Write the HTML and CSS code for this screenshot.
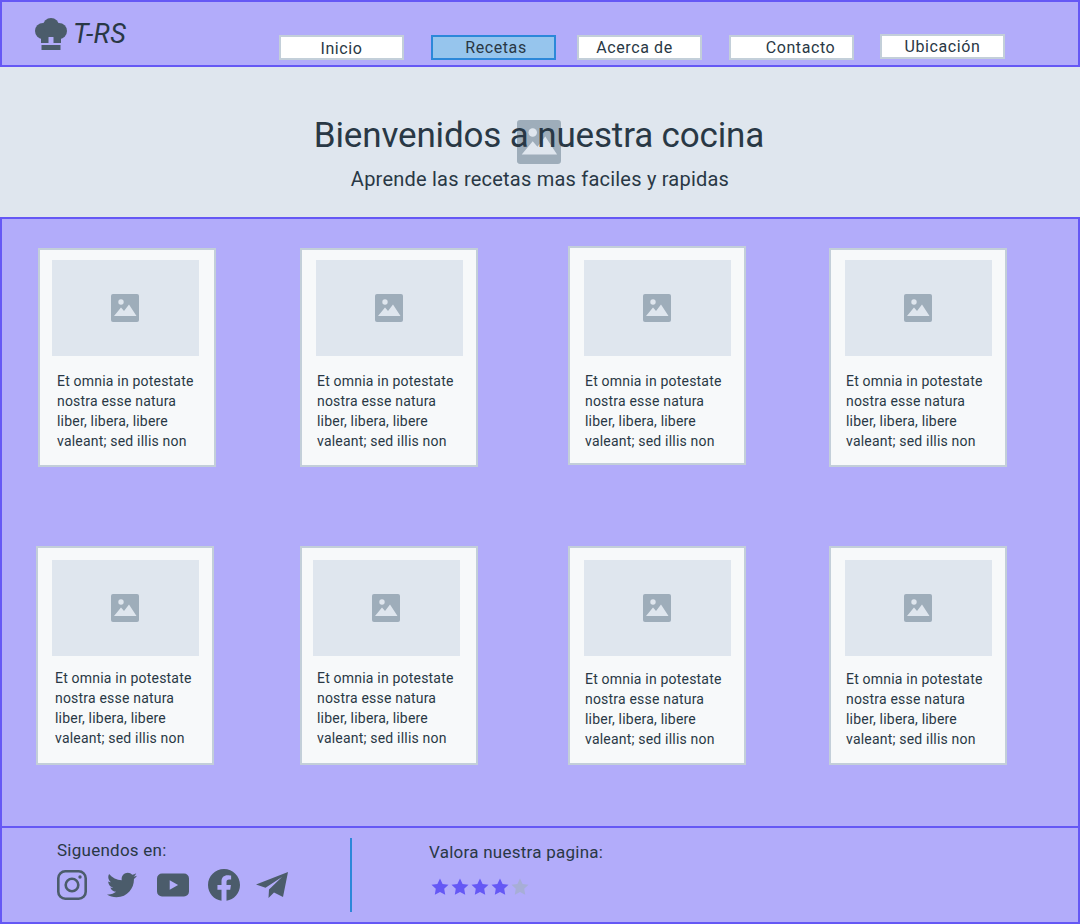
FILE: index.html
```html
<!doctype html>
<html lang="es">

<head>
  <title>T-RS</title>
  <meta charset="utf-8" />
  <link rel="stylesheet" href="styles.css">
</head>

<body>
  <svg class="defs" width="0" height="0">
    <symbol id="img" viewBox="0 0 28 28">
      <rect width="28" height="28" rx="2" fill="#9eadba" />
      <circle cx="10" cy="8" r="2.7" fill="#dfe6ee" />
      <path d="M3 22 L10 13.5 L13 17 L18 10.5 L25.5 22 Z" fill="#dfe6ee" />
    </symbol>
    <symbol id="star" viewBox="0 0 20 20">
      <path d="M10 1.5l2.6 5.4 5.9.8-4.3 4.1 1 5.9-5.200-2.800-5.200 2.800 1-5.900L1.500 7.700l5.900-.8z" />
    </symbol>
  </svg>

  <header class="topbar">
    <div class="logo">
      <svg class="logo-icon" viewBox="0 0 32 32">
        <circle cx="8" cy="13" r="8" />
        <circle cx="24" cy="13" r="8" />
        <circle cx="16" cy="8" r="8" />
        <path d="M6 14h20v11h-7.500v-6h-5v6H6z" />
        <rect x="6.500" y="27" width="19" height="5" />
      </svg>
      <span class="logo-text">T-RS</span>
    </div>
    <nav class="nav">
      <a class="nav-item nav-home">Inicio</a>
      <a class="nav-item nav-active">Recetas</a>
      <a class="nav-item nav-about">Acerca de</a>
      <a class="nav-item nav-contact">Contacto</a>
      <a class="nav-item nav-place">Ubicación</a>
    </nav>
  </header>

  <section class="hero">
    <svg class="hero-icon"><use href="#img" /></svg>
    <h1>Bienvenidos a nuestra cocina</h1>
    <p>Aprende las recetas mas faciles y rapidas</p>
  </section>

  <main class="recipes">
    <article class="card card-first">
      <div class="media media-14"><svg><use href="#img" /></svg></div>
      <p class="text-19">Et omnia in potestate nostra esse natura liber, libera, libere valeant; sed illis non</p>
    </article>
    <article class="card">
      <div class="media"><svg><use href="#img" /></svg></div>
      <p>Et omnia in potestate nostra esse natura liber, libera, libere valeant; sed illis non</p>
    </article>
    <article class="card card-raised">
      <div class="media"><svg><use href="#img" /></svg></div>
      <p>Et omnia in potestate nostra esse natura liber, libera, libere valeant; sed illis non</p>
    </article>
    <article class="card">
      <div class="media"><svg><use href="#img" /></svg></div>
      <p>Et omnia in potestate nostra esse natura liber, libera, libere valeant; sed illis non</p>
    </article>

    <article class="card card-low">
      <div class="media"><svg><use href="#img" /></svg></div>
      <p class="text-19 text-up">Et omnia in potestate nostra esse natura liber, libera, libere valeant; sed illis non</p>
    </article>
    <article class="card card-low">
      <div class="media media-13"><svg><use href="#img" /></svg></div>
      <p class="text-up">Et omnia in potestate nostra esse natura liber, libera, libere valeant; sed illis non</p>
    </article>
    <article class="card card-low">
      <div class="media"><svg><use href="#img" /></svg></div>
      <p>Et omnia in potestate nostra esse natura liber, libera, libere valeant; sed illis non</p>
    </article>
    <article class="card card-low">
      <div class="media"><svg><use href="#img" /></svg></div>
      <p>Et omnia in potestate nostra esse natura liber, libera, libere valeant; sed illis non</p>
    </article>
  </main>

  <footer class="footer">
    <div class="follow">
      <div class="footer-label">Siguendos en:</div>
      <div class="socials">
        <svg class="ig" viewBox="0 0 30 30">
          <rect x="1.300" y="1.300" width="27.400" height="27.400" rx="7" fill="none" stroke="#4b5c6b" stroke-width="2.600" />
          <circle cx="15" cy="15" r="6.300" fill="none" stroke="#4b5c6b" stroke-width="2.600" />
          <circle cx="23" cy="7" r="1.700" />
        </svg>
        <svg class="tw" viewBox="0 0 512 512">
          <path d="M459.37 151.716c.325 4.548.325 9.097.325 13.645 0 138.72-105.583 298.558-298.558 298.558-59.452 0-114.68-17.219-161.137-47.106 8.447.974 16.568 1.299 25.34 1.299 49.055 0 94.213-16.568 130.274-44.832-46.132-.975-84.792-31.188-98.112-72.772 6.498.974 12.995 1.624 19.818 1.624 9.421 0 18.843-1.3 27.614-3.573-48.081-9.747-84.143-51.98-84.143-102.985v-1.299c13.969 7.797 30.214 12.67 47.431 13.319-28.264-18.843-46.781-51.005-46.781-87.391 0-19.492 5.197-37.36 14.294-52.954 51.655 63.675 129.3 105.258 216.365 109.807-1.624-7.797-2.599-15.918-2.599-24.04 0-57.828 46.782-104.934 104.934-104.934 30.213 0 57.502 12.67 76.67 33.137 23.715-4.548 46.456-13.32 66.599-25.34-7.798 24.366-24.366 44.833-46.132 57.827 21.117-2.273 41.584-8.122 60.426-16.243-14.292 20.791-32.161 39.308-52.628 54.253z" />
        </svg>
        <svg class="yt" viewBox="0 0 32 24">
          <path fill-rule="evenodd" d="M5 .5h22a5 5 0 0 1 5 5v13a5 5 0 0 1-5 5H5a5 5 0 0 1-5-5v-13a5 5 0 0 1 5-5zM12.700 7.200v9.600l8.400-4.800z" />
        </svg>
        <svg class="fb" viewBox="8 8 496 496">
          <path d="M504 256C504 119 393 8 256 8S8 119 8 256c0 123.78 90.69 226.38 209.25 245V327.69h-63V256h63v-54.64c0-62.15 37-96.48 93.67-96.48 27.14 0 55.52 4.84 55.52 4.84v61h-31.28c-30.8 0-40.41 19.12-40.41 38.73V256h68.78l-11 71.69h-57.78V501C413.31 482.38 504 379.78 504 256z" />
        </svg>
        <svg class="tg" viewBox="0 0 32 26">
          <path d="M32 0L0 12.500l9.500 3.300L26 5 13 17.500 12.500 26l5.500-5.500 9 4.500z" />
        </svg>
      </div>
    </div>
    <div class="divider"></div>
    <div class="rate">
      <div class="footer-label">Valora nuestra pagina:</div>
      <div class="stars">
        <svg class="star"><use href="#star" /></svg>
        <svg class="star"><use href="#star" /></svg>
        <svg class="star"><use href="#star" /></svg>
        <svg class="star"><use href="#star" /></svg>
        <svg class="star star-off"><use href="#star" /></svg>
      </div>
    </div>
  </footer>
</body>

</html>
```

FILE: styles.css
```css
html {
  font-family: "Roboto", "Liberation Sans", sans-serif;
  color: #293845;
}

body {
  margin: 0;
  width: 1080px;
  height: 924px;
  overflow: hidden;
}

.defs {
  position: absolute;
}

/* top bar */
.topbar {
  box-sizing: border-box;
  height: 67px;
  display: flex;
  align-items: flex-end;
  background-color: #b2acfa;
  border: 2px solid #6558f5;
  padding: 0 0 5px 33px;
}

.logo {
  display: flex;
  align-items: center;
  gap: 6px;
  width: 244px;
  align-self: flex-start;
  margin-top: 15px;
}

.logo-icon {
  width: 32px;
  height: 32px;
  fill: #4b5c6b;
}

.logo-text {
  margin-top: 1px;
  font-size: 27px;
  font-style: italic;
  line-height: 32px;
  letter-spacing: .4px;
}

.nav {
  display: flex;
  align-items: flex-end;
  gap: 27px;
}

.nav-item {
  box-sizing: border-box;
  width: 125px;
  height: 25px;
  display: block;
  background-color: #fff;
  border: 2px solid #c3cfd9;
  font-size: 16px;
  line-height: 21px;
  letter-spacing: .6px;
  text-align: center;
}

.nav-home {
  padding-top: 1px;
}

.nav-active {
  background-color: #96c5ed;
  border-color: #2c88d9;
  padding-left: 5px;
}

.nav-about {
  margin-left: -6px;
  padding-left: 0;
  padding-right: 10px;
}

.nav-contact {
  padding-left: 18px;
}

.nav-place {
  margin-left: -1px;
  margin-bottom: 1px;
}

/* hero */
.hero {
  position: relative;
  height: 150px;
  background-color: #dfe6ee;
  text-align: center;
  overflow: hidden;
}

.hero h1 {
  position: relative;
  margin: 48px 0 0;
  padding-right: 2px;
  font-size: 35px;
  font-weight: 400;
  line-height: 42px;
  letter-spacing: -.15px;
}

.hero p {
  position: relative;
  margin: 10px 0 0;
  font-size: 20px;
  line-height: 24px;
  letter-spacing: .22px;
}

.hero-icon {
  position: absolute;
  left: 517px;
  top: 53px;
  width: 44px;
  height: 44px;
}

/* cards */
.recipes {
  box-sizing: border-box;
  height: 610px;
  display: grid;
  grid-template-columns: 264px 268px 261px 178px;
  grid-auto-rows: 298px;
  background-color: #b2acfa;
  border: 2px solid #6558f5;
  border-bottom: 0;
  padding: 29px 0 0 34px;
  align-content: start;
}

.card {
  box-sizing: border-box;
  width: 178px;
  height: 219px;
  background-color: #f7f9fa;
  border: 2px solid #c3cfd9;
  padding-top: 10px;
}

.card-first {
  margin-left: 2px;
}

.card-raised {
  margin-top: -2px;
  padding-top: 12px;
}

.card-low {
  padding-top: 12px;
}

.media {
  box-sizing: border-box;
  width: 147px;
  height: 96px;
  margin-left: 14px;
  padding-right: 1px;
  display: flex;
  align-items: center;
  justify-content: center;
  background-color: #dfe6ee;
}

.media svg {
  width: 28px;
  height: 28px;
}

.media-14 {
  margin-left: 12px;
}

.media-13 {
  margin-left: 11px;
}

.card p {
  margin: 15px 0 0;
  padding-left: 15px;
  width: 150px;
  font-size: 14px;
  line-height: 20px;
  letter-spacing: .2px;
}

.card p.text-19 {
  padding-left: 17px;
}

.card-low p {
  margin-top: 13px;
}

.card-low p.text-up {
  margin-top: 12px;
}

/* footer */
.footer {
  box-sizing: border-box;
  height: 98px;
  margin-top: -1px;
  display: flex;
  background-color: #b2acfa;
  border: 2px solid #6558f5;
  padding-left: 55px;
}

.follow {
  width: 293px;
}

.footer-label {
  font-size: 17px;
  line-height: 20px;
  letter-spacing: .25px;
}

.follow .footer-label {
  margin-top: 12px;
}

.socials {
  display: flex;
  align-items: center;
  gap: 20px;
  height: 34px;
  margin-top: 8px;
  fill: #4b5c6b;
}

.ig {
  width: 30px;
  height: 30px;
}

.tw {
  width: 30px;
  height: 30px;
}

.yt {
  width: 32px;
  height: 24px;
}

.fb {
  width: 32px;
  height: 32px;
  margin-left: -1px;
}

.tg {
  width: 32px;
  height: 26px;
  margin-left: -4px;
}

.divider {
  width: 2px;
  height: 74px;
  margin-top: 10px;
  background-color: #2c88d9;
}

.rate {
  margin-left: 77px;
  padding-top: 14px;
}

.stars {
  display: flex;
  margin: 15px 0 0 1px;
}

.star {
  width: 20px;
  height: 20px;
  fill: #6558f5;
}

.star-off {
  fill: #a7aed6;
}
```
